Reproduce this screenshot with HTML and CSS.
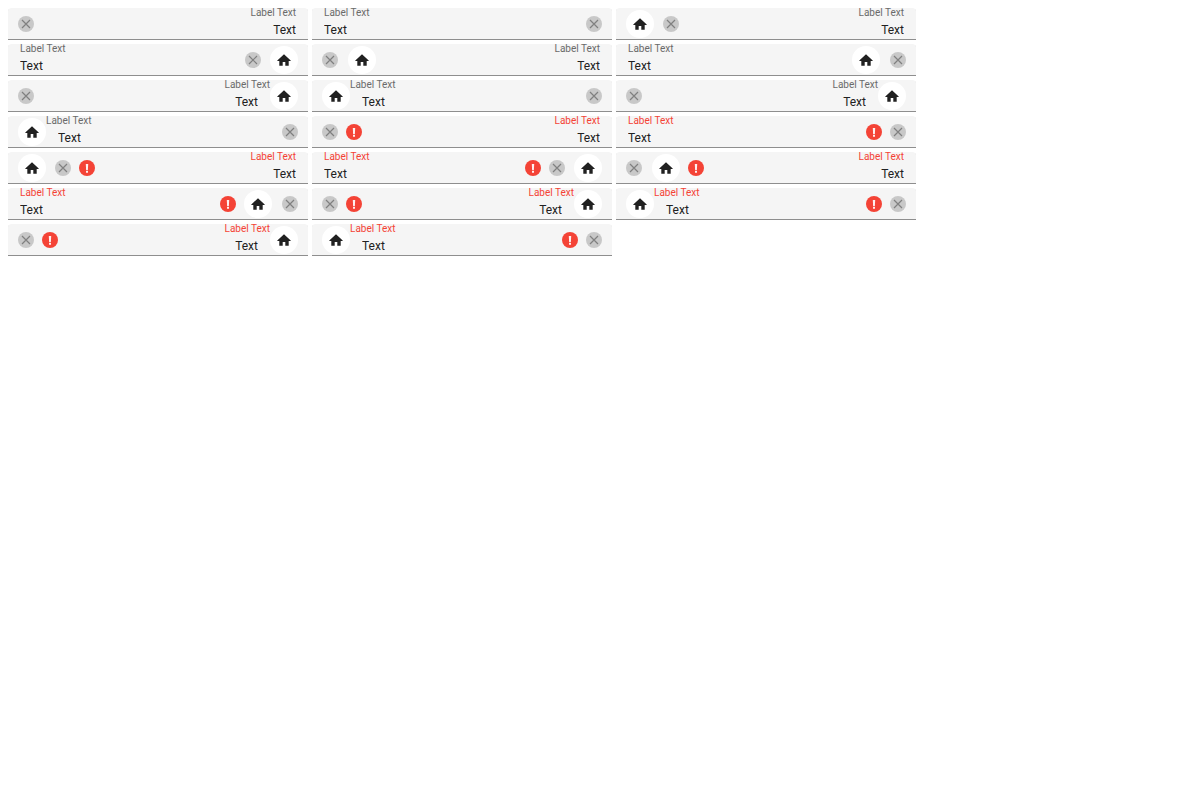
FILE: index.html
```html
<!DOCTYPE html>
<html lang="en">
<head>
<meta charset="utf-8">
<title>Text fields</title>
<link rel="stylesheet" href="styles.css">
</head>
<body>
<svg class="sprite" aria-hidden="true">
  <symbol id="home" viewBox="0 0 16 16"><path d="M8 2.3l6.7 6.1v.5h-2v4.9H9.3V9.9H6.7v3.9H3.3V8.9h-2v-.5z"/></symbol>
  <symbol id="clear" viewBox="0 0 16 16"><path d="M4 4l8 8M12 4l-8 8"/></symbol>
  <symbol id="error" viewBox="0 0 16 16"><circle cx="8" cy="8" r="8" fill="#f44336"/><path d="M6.8 4h2.4l-.3 6H7.1zM7 10.8h2v2H7z" fill="#fff" fill-opacity=".92"/></symbol>
</svg>
<main class="fields" id="fields"></main>
<script src="fields.js"></script>
</body>
</html>
```
FILE: styles.css
```css
body {
  margin: 8px;
  background: #fff;
  font-family: Roboto, sans-serif;
}

.sprite {
  display: none;
}

.fields {
  display: flex;
  flex-wrap: wrap;
  gap: 4px;
  max-width: 1000px;
}

.field {
  display: flex;
  box-sizing: border-box;
  width: 300px;
  height: 32px;
  background: #f5f5f5;
  border-radius: 4px 4px 0 0;
  box-shadow: inset 0 -1px #8e8e8e;
  overflow: hidden;
}

.icons {
  display: flex;
  align-items: center;
  gap: 8px;
}

.lead {
  padding-left: 10px;
}

.trail {
  padding-right: 10px;
}

.content {
  display: flex;
  flex: 1;
  flex-direction: column;
  min-width: 0;
}

.label {
  padding: 0 12px;
  color: #6a6a6a;
  font-size: 10px;
  line-height: 10px;
}

.flush .label {
  padding: 0;
}

.input {
  box-sizing: border-box;
  width: 100%;
  height: 16px;
  margin: 4px 0 0;
  padding: 0 12px;
  border: 0;
  outline: 0;
  background: transparent;
  color: #212121;
  font-family: inherit;
  font-size: 12px;
  line-height: 16px;
}

.end .label,
.end .input {
  text-align: right;
}

.invalid .label {
  color: #f44336;
}

.clear,
.home {
  display: grid;
  flex: none;
  place-items: center;
  padding: 0;
  border: 0;
  border-radius: 50%;
}

.clear {
  width: 16px;
  height: 16px;
  background: #c8c8c8;
}

.home {
  width: 28px;
  height: 28px;
  background: #fff;
}

.clear svg,
.error {
  display: block;
  flex: none;
  width: 16px;
  height: 16px;
}

.clear svg {
  fill: none;
  stroke: #808080;
  stroke-width: 1.2;
}

.home svg {
  width: 16px;
  height: 16px;
  fill: #212121;
}

.lead .home + .clear {
  margin-left: 1px;
}

.lead .clear + .home {
  margin-left: 2px;
}

.trail .clear + .home {
  margin-left: 1px;
}

.trail .home + .clear {
  margin-left: 2px;
}
```
FILE: fields.js
```js
// Each field: leading icons, text alignment, trailing icons, label flush with the content edge.
const fields = [
  ["clear", "end", "", false],
  ["", "start", "clear", false],
  ["home clear", "end", "", false],
  ["", "start", "clear home", false],
  ["clear home", "end", "", false],
  ["", "start", "home clear", false],
  ["clear", "end", "home", true],
  ["home", "start", "clear", true],
  ["clear", "end", "home", true],
  ["home", "start", "clear", true],
  ["clear error", "end", "", false],
  ["", "start", "error clear", false],
  ["home clear error", "end", "", false],
  ["", "start", "error clear home", false],
  ["clear home error", "end", "", false],
  ["", "start", "error home clear", false],
  ["clear error", "end", "home", true],
  ["home", "start", "error clear", true],
  ["clear error", "end", "home", true],
  ["home", "start", "error clear", true]
];

const icon = {
  clear: '<button class="clear" type="button" aria-label="Clear"><svg><use href="#clear"/></svg></button>',
  home: '<button class="home" type="button" aria-label="Home"><svg><use href="#home"/></svg></button>',
  error: '<svg class="error" role="img" aria-label="Error"><use href="#error"/></svg>'
};

const group = (side, names) =>
  names ? `<div class="icons ${side}">${names.split(" ").map(n => icon[n]).join("")}</div>` : "";

document.getElementById("fields").innerHTML = fields.map(([lead, align, trail, flush], i) => {
  const invalid = (lead + trail).includes("error");
  return `<div class="field ${align}${flush ? " flush" : ""}${invalid ? " invalid" : ""}">
    ${group("lead", lead)}
    <div class="content">
      <label class="label" for="field-${i}">Label Text</label>
      <input class="input" id="field-${i}" type="text" value="Text">
    </div>
    ${group("trail", trail)}
  </div>`;
}).join("");
```
